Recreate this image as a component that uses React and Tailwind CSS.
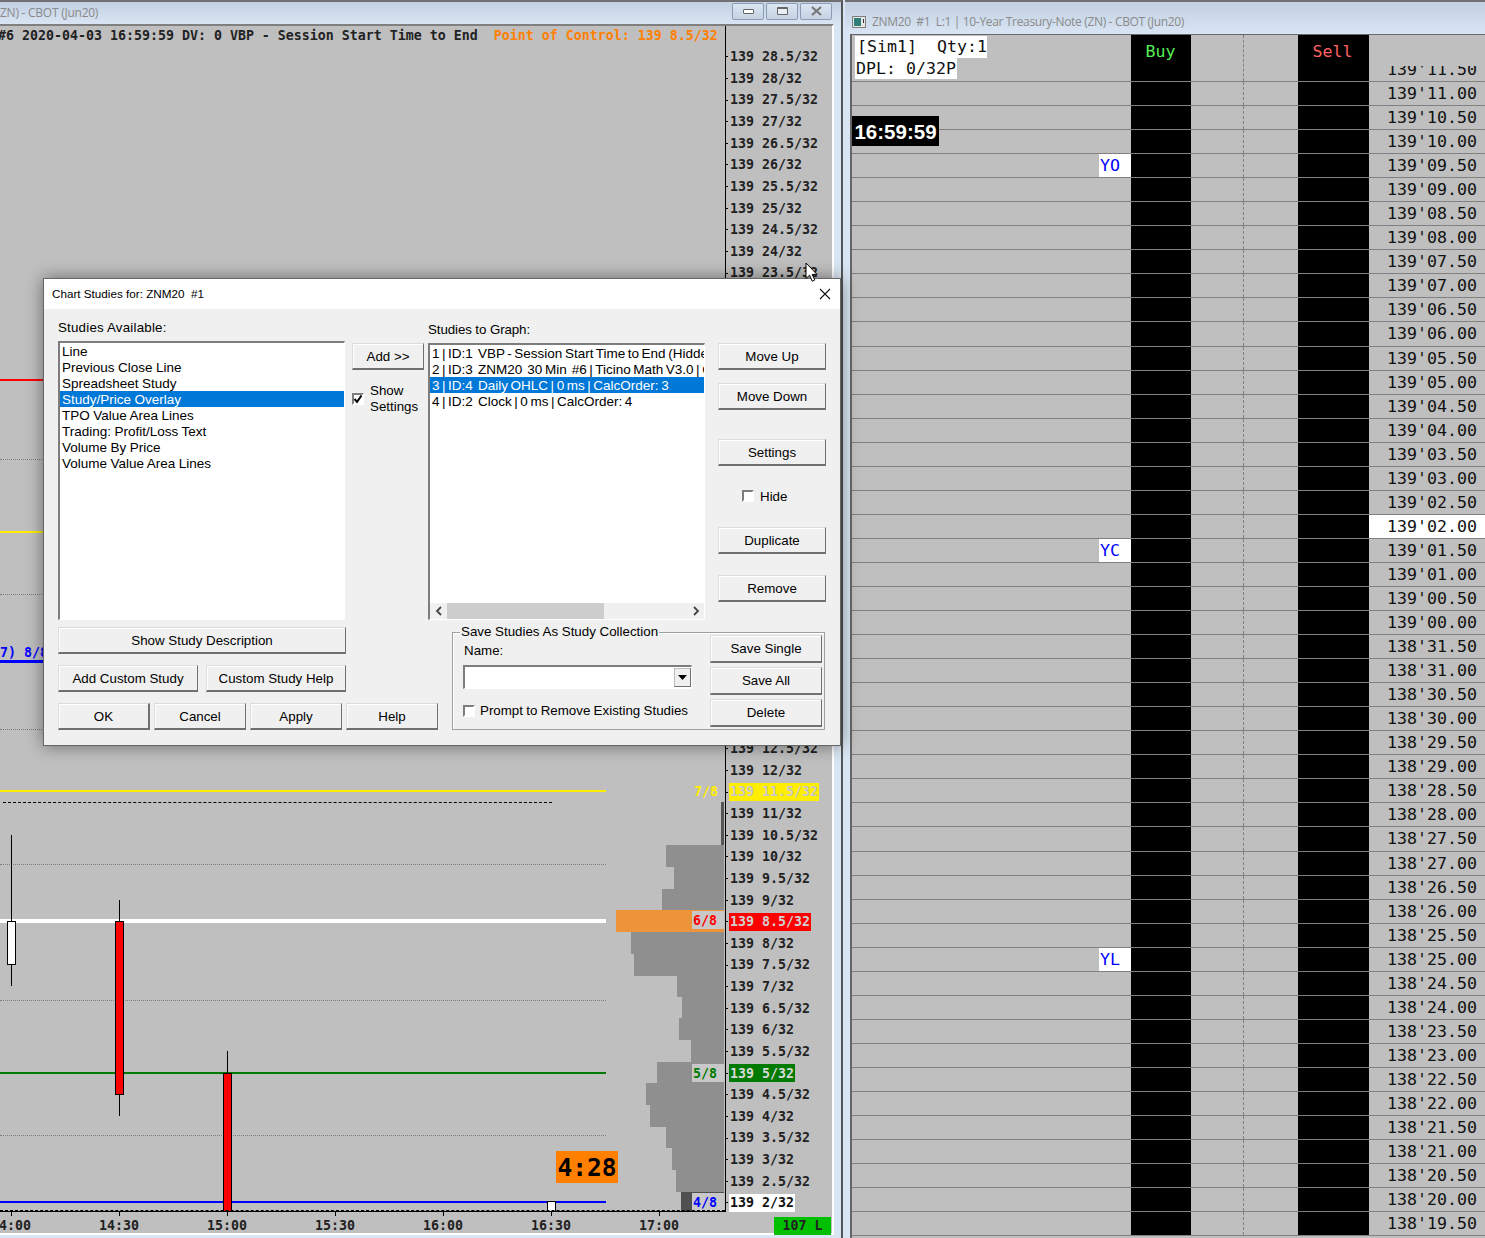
import React from 'react';

const MONO = "font-['DejaVu_Sans_Mono',monospace]";

// price axis of the chart, from 28.5/32 down to 2/32
const axisLabels = [];
for (let v = 28.5; v >= 2; v -= 0.5) axisLabels.push(v);

const axisMarks = {
  11.5: 'bg-[#ffee00] text-[#c8c8c8]',
  8.5: 'bg-[#ff0000] text-[#d0d0d0]',
  5: 'bg-[#007a00] text-[#d8d8d8]',
  2: 'bg-white text-[#111]',
};

// volume profile, [x, top, bottom]
const profile = [
  [721, 802, 845, '#555555'],
  [666, 845, 867],
  [674, 867, 889],
  [662, 889, 910],
  [616, 910, 932, '#ed943b'],
  [631, 932, 954],
  [634, 954, 976],
  [677, 976, 997],
  [682, 997, 1018],
  [679, 1018, 1040],
  [691, 1040, 1062],
  [657, 1062, 1083],
  [646, 1083, 1105],
  [650, 1105, 1127],
  [666, 1127, 1148],
  [672, 1148, 1170],
  [676, 1170, 1192],
  [681, 1192, 1212, '#505050'],
];

const dottedRows = [459, 594, 729, 864, 1000, 1135];
const timeLabels = [['14:00', 11], ['14:30', 119], ['15:00', 227], ['15:30', 335], ['16:00', 443], ['16:30', 551], ['17:00', 659]];

// ladder prices, half ticks from 139'11.00
const ladderPrices = [];
for (let i = 0; i < 48; i++) {
  const total = 139 * 32 + 11 - i * 0.5;
  const whole = Math.floor(total / 32);
  const rest = total - whole * 32;
  ladderPrices.push(`${whole}'${rest.toFixed(2).padStart(5, '0')}`);
}
const ladderTags = { "139'09.50": 'YO', "139'01.50": 'YC', "138'25.00": 'YL' };

const BTN = 'flex items-center justify-center border border-t-[#dcdcdc] border-l-[#dcdcdc] border-r-[#707070] border-b-2 border-b-[#707070] bg-[#f0f0f0] pt-[2px] shadow-[inset_1px_1px_0_#fff] text-[13.33px] leading-none text-black';
const SUNKEN = 'border-t-2 border-l-2 border-r border-b border-t-[#7d7d7d] border-l-[#7d7d7d] border-r-white border-b-white bg-white';

function Btn({ className, children }) {
  return <div className={`${BTN} ${className}`}>{children}</div>;
}

function Check({ checked }) {
  return (
    <div className="flex h-[12px] w-[12px] shrink-0 items-center justify-center border-2 border-t-[#7d7d7d] border-l-[#7d7d7d] border-r-white border-b-white bg-white">
      {checked && (
        <svg width="10" height="10" viewBox="0 0 10 10" className="shrink-0">
          <path d="M1.5 5 L4 7.8 L8.5 1.5" fill="none" stroke="#000" strokeWidth="2" />
        </svg>
      )}
    </div>
  );
}

function ListRow({ selected, spacing, children }) {
  return (
    <div className={`h-[16px] overflow-hidden whitespace-pre px-[2px] text-[13.5px] leading-[18px] ${spacing} ${selected ? 'bg-[#0078d7] text-white' : 'text-black'}`}>
      {children}
    </div>
  );
}

function ChartStudiesDialog() {
  const tight = '[word-spacing:-1.2px]';
  return (
    <div className="absolute left-[43px] top-[278px] z-10 h-[468px] w-[798px] border border-[#666] bg-[#f0f0f0] font-['Liberation_Sans',sans-serif] text-black shadow-[0_0_16px_rgba(0,0,0,0.45)]">
      <div className="flex h-[30px] items-center justify-between bg-white pl-[8px] pr-[9px] text-[11.7px]">
        <span className="whitespace-pre">Chart Studies for: ZNM20  #1</span>
        <svg width="12" height="12" viewBox="0 0 12 12">
          <path d="M1 1 L11 11 M11 1 L1 11" stroke="#111" strokeWidth="1.1" />
        </svg>
      </div>

      <div className="pl-[14px] pt-[10px] text-[13.33px]">
        <div className="flex h-[301px]">
          <div className="w-[287px]">
            <div className="h-[22px] leading-[18px] tracking-[0.2px]">Studies Available:</div>
            <div className={`h-[279px] ${SUNKEN}`}>
              {['Line', 'Previous Close Line', 'Spreadsheet Study', 'Study/Price Overlay', 'TPO Value Area Lines', 'Trading: Profit/Loss Text', 'Volume By Price', 'Volume Value Area Lines'].map((s, i) => (
                <ListRow key={s} selected={i === 3} spacing="[word-spacing:-0.3px]">{s}</ListRow>
              ))}
            </div>
          </div>

          <div className="ml-[7px] w-[72px] pt-[24px]">
            <Btn className="h-[27px] w-[72px]">Add &gt;&gt;</Btn>
            <div className="mt-[13px] flex items-center gap-[6px]">
              <Check checked />
              <div className="leading-[16px]">Show<br />Settings</div>
            </div>
          </div>

          <div className="ml-[4px] w-[277px] pt-[2px]">
            <div className="h-[22px] leading-[18px] tracking-[-0.1px]">Studies to Graph:</div>
            <div className={`flex h-[277px] flex-col ${SUNKEN}`}>
              <div className="flex-1">
                <ListRow spacing={tight}>1 | ID:1  VBP - Session Start Time to End (Hidden) | 0 ms</ListRow>
                <ListRow spacing={tight}>2 | ID:3  ZNM20  30 Min  #6 | Ticino Math V3.0 | CalcOrder: 2</ListRow>
                <ListRow selected spacing={tight}>3 | ID:4  Daily OHLC | 0 ms | CalcOrder: 3</ListRow>
                <ListRow spacing={tight}>4 | ID:2  Clock | 0 ms | CalcOrder: 4</ListRow>
              </div>
              <div className="flex h-[16px] items-center bg-[#f0f0f0]">
                <div className="flex w-[17px] justify-center">
                  <svg width="8" height="10" viewBox="0 0 8 10"><path d="M6 1 L2 5 L6 9" fill="none" stroke="#444" strokeWidth="1.8" /></svg>
                </div>
                <div className="h-full w-[157px] bg-[#cdcdcd]" />
                <div className="flex flex-1 justify-end pr-[4px]">
                  <svg width="8" height="10" viewBox="0 0 8 10"><path d="M2 1 L6 5 L2 9" fill="none" stroke="#444" strokeWidth="1.8" /></svg>
                </div>
              </div>
            </div>
          </div>

          <div className="ml-[13px] flex w-[108px] flex-col pt-[24px]">
            <Btn className="h-[27px]">Move Up</Btn>
            <Btn className="mt-[13px] h-[27px]">Move Down</Btn>
            <Btn className="mt-[29px] h-[27px]">Settings</Btn>
            <div className="mt-[24px] flex h-[12px] items-center gap-[6px] pl-[24px]">
              <Check />
              <span className="pt-px">Hide</span>
            </div>
            <Btn className="mt-[25px] h-[27px]">Duplicate</Btn>
            <Btn className="mt-[21px] h-[27px]">Remove</Btn>
          </div>
        </div>

        <div className="flex">
          <div className="w-[380px] pt-[7px]">
            <Btn className="h-[27px] w-[288px]">Show Study Description</Btn>
            <div className="mt-[11px] flex gap-[8px]">
              <Btn className="h-[27px] w-[140px]">Add Custom Study</Btn>
              <Btn className="h-[27px] w-[140px]">Custom Study Help</Btn>
            </div>
            <div className="mt-[11px] flex gap-[4px]">
              <Btn className="h-[27px] w-[92px] border-[#666] border-r-2 border-r-[#666] border-b-[#666]">OK</Btn>
              <Btn className="h-[27px] w-[92px]">Cancel</Btn>
              <Btn className="h-[27px] w-[92px]">Apply</Btn>
              <Btn className="h-[27px] w-[92px]">Help</Btn>
            </div>
          </div>

          <div className="relative ml-[14px] mt-[12px] flex h-[98px] w-[373px] border border-[#a0a0a0] shadow-[inset_1px_1px_0_#fff]">
            <span className="absolute left-[7px] top-[-9px] bg-[#f0f0f0] px-[1px] leading-[15px]">Save Studies As Study Collection</span>
            <div className="w-[257px] pl-[10px] pt-[10px]">
              <div className="pl-[1px] leading-[16px]">Name:</div>
              <div className={`mt-[6px] flex h-[24px] w-[229px] items-center justify-end ${SUNKEN}`}>
                <div className="flex h-[19px] w-[17px] items-center justify-center border border-[#bbb] border-r-[#707070] border-b-[#707070] bg-[#f0f0f0]">
                  <svg width="9" height="5" viewBox="0 0 9 5"><path d="M0 0 H9 L4.5 5 Z" fill="#000" /></svg>
                </div>
              </div>
              <div className="mt-[12px] flex items-center gap-[5px]">
                <Check />
                <span className="whitespace-pre [word-spacing:-0.4px]">Prompt to Remove Existing Studies</span>
              </div>
            </div>
            <div className="flex w-[112px] flex-col gap-[4px] pt-[2px]">
              <Btn className="h-[28px] pb-[2px]">Save Single</Btn>
              <Btn className="h-[28px] pb-[2px]">Save All</Btn>
              <Btn className="h-[28px] pb-[2px]">Delete</Btn>
            </div>
          </div>
        </div>
      </div>
    </div>
  );
}

function WinButton({ children }) {
  return (
    <div className="flex h-[17px] w-[32px] items-center justify-center rounded-[2px] border border-[#8b9db4] bg-linear-to-b from-[#dce6f2] to-[#c4d2e3]">
      {children}
    </div>
  );
}

function LeftWindow() {
  return (
    <div className="flex h-full w-[843px] shrink-0 flex-col border-r-2 border-r-[#555] border-t-2 border-t-[#707070] bg-[#d9e5f3]">
      <div className="flex h-[22px] shrink-0 items-center justify-between bg-linear-to-b from-[#c2d0e2] to-[#d9e5f3] pr-[9px] font-['Open_Sans',sans-serif] text-[12px] text-[#8a8a8a]">
        <span className="-mt-[1px] whitespace-pre tracking-[-0.25px]">ZN) - CBOT (Jun20)</span>
        <div className="-mt-[4px] flex gap-[2px]">
          <WinButton><div className="h-[5px] w-[11px] rounded-[1px] border border-[#666] bg-white" /></WinButton>
          <WinButton><div className="h-[8px] w-[11px] rounded-[1px] border border-t-2 border-[#666] bg-[#e8eef6]" /></WinButton>
          <WinButton>
            <svg width="13" height="10" viewBox="0 0 13 10"><path d="M2 1 L11 9 M11 1 L2 9" stroke="#777" strokeWidth="2.2" /></svg>
          </WinButton>
        </div>
      </div>

      <div className={`flex h-[1211px] w-[834px] shrink-0 border-t-2 border-t-[#808080] border-r-2 border-r-white border-b-2 border-b-white bg-[#bfbfbf] ${MONO} text-[13.29px] font-bold`}>
        <ChartPlot />
        <PriceAxis />
      </div>
    </div>
  );
}

function ChartPlot() {
  return (
    <div className="relative h-full w-[726px] shrink-0 overflow-hidden">
      <div className="-ml-[2px] mt-[1px] h-[17px] whitespace-pre leading-[17px] text-[#222]">
        #6 2020-04-03 16:59:59 DV: 0 VBP - Session Start Time to End  <span className="text-[#ff8000]">Point of Control: 139 8.5/32</span>
      </div>

      {dottedRows.map((y) => (
        <div key={y} className="absolute left-0 w-[606px] border-t border-dotted border-[#7c7c7c]" style={{ top: y - 26 }} />
      ))}

      <div className="absolute left-0 top-[353px] h-[2px] w-[606px] bg-[#ff0000]" />
      <div className="absolute left-0 top-[505px] h-[2px] w-[606px] bg-[#ffee00]" />
      <div className="absolute left-0 top-[617px] text-[#0000ff]">7) 8/8</div>
      <div className="absolute left-0 top-[634px] h-[3px] w-[606px] bg-[#0000ff]" />
      <div className="absolute left-0 top-[764px] h-[2px] w-[606px] bg-[#ffee00]" />
      <div className="absolute left-[3px] top-[776px] w-[549px] border-t border-dashed border-black" />
      <div className="absolute left-0 top-[893px] h-[4px] w-[606px] bg-white" />
      <div className="absolute left-0 top-[1046px] h-[2px] w-[606px] bg-[#007a00]" />
      <div className="absolute left-0 top-[1175px] h-[2px] w-[606px] bg-[#0000ff]" />

      {/* candles */}
      <div className="absolute left-[11px] top-[809px] h-[151px] w-px bg-black" />
      <div className="absolute left-[7px] top-[895px] h-[44px] w-[9px] border border-black bg-white" />
      <div className="absolute left-[119px] top-[874px] h-[216px] w-px bg-black" />
      <div className="absolute left-[115px] top-[895px] h-[174px] w-[9px] border border-black bg-[#ff0000]" />
      <div className="absolute left-[227px] top-[1025px] h-[30px] w-px bg-black" />
      <div className="absolute left-[223px] top-[1047px] h-[139px] w-[9px] border border-black bg-[#ff0000]" />
      <div className="absolute left-[547px] top-[1175px] h-[11px] w-[9px] border border-black bg-white" />

      {/* volume profile */}
      {profile.map(([x, top, bottom, color]) => (
        <div
          key={top}
          className="absolute bg-[#8f8f8f]"
          style={{ left: x, width: 724 - x, top: top - 26, height: bottom - top, backgroundColor: color }}
        />
      ))}

      <div className="absolute left-[694px] top-[756px] text-[#ffee00]">7/8</div>
      <div className="absolute left-[692px] top-[885px] h-[18px] w-[32px] bg-[#c8c8c8] pl-[1px] leading-[20px] text-[#ff0000]">6/8</div>
      <div className="absolute left-[692px] top-[1038px] h-[18px] w-[32px] bg-[#c8c8c8] pl-[1px] leading-[20px] text-[#007a00]">5/8</div>
      <div className="absolute left-[692px] top-[1167px] h-[18px] w-[32px] bg-[#c8c8c8] pl-[1px] leading-[20px] text-[#0000ff]">4/8</div>

      <div className="absolute left-[556px] top-[1125px] flex h-[32px] w-[62px] items-center justify-center bg-[#ff8000] pt-[2px] text-[24.6px] leading-none text-black">4:28</div>

      {/* axes */}
      <div className="absolute left-[725px] top-0 h-[1186px] w-px bg-black" />
      <div className="absolute left-0 top-[1185px] h-px w-[726px] bg-black" />
      <div className="absolute left-0 top-[1184px] w-[725px] border-t border-dashed border-black" />

      {timeLabels.map(([t, x]) => (
        <React.Fragment key={t}>
          <div className="absolute top-[1186px] h-[4px] w-px bg-black" style={{ left: x }} />
          <div className="absolute top-[1192px] w-[60px] text-center leading-[16px] text-[#222]" style={{ left: x - 30 }}>{t}</div>
        </React.Fragment>
      ))}
    </div>
  );
}

function PriceAxis() {
  return (
    <div className="flex-1 pt-[20px] leading-none text-[#222]">
      {axisLabels.map((v) => (
        <div key={v} className="flex h-[21.64px] items-center">
          <span className="mr-[1px] h-px w-[2px] bg-black" />
          <span className={`flex h-[18px] items-center whitespace-pre pl-[1px] pr-[1px] ${axisMarks[v] || ''}`}>{`139 ${v}/32`}</span>
        </div>
      ))}
      <div className="ml-[48px] mt-[3px] flex h-[18px] w-[57px] items-center justify-center whitespace-pre bg-[#00c000] text-[#222]">107 L</div>
    </div>
  );
}

function LadderRow({ price, tag, current }) {
  return (
    <div className="flex h-[24.06px] border-b border-[#808080]">
      <div className="flex w-[279px] justify-end">
        {tag && <div className="w-[32px] bg-white pl-[1px] leading-[23px] text-[#0000ff]">{tag}</div>}
      </div>
      <div className="w-[60px] bg-black" />
      <div className="w-[107px]"><div className="h-full w-[53px] border-r border-dashed border-[#808080]" /></div>
      <div className="w-[71px] bg-black" />
      <div className={`flex-1 pl-[18px] leading-[23px] text-[#111] ${current ? 'bg-white' : ''}`}>{price}</div>
    </div>
  );
}

function RightWindow() {
  return (
    <div className="relative flex h-full flex-1 flex-col border-t-2 border-t-[#707070] bg-[#d9e5f3]">
      <div className="flex h-[32px] shrink-0 items-center gap-[6px] bg-linear-to-b from-[#c2d0e2] to-[#d9e5f3] pl-[7px] pt-[7px] font-['Open_Sans',sans-serif] text-[12px] text-[#8a8a8a]">
        <svg width="14" height="12" viewBox="0 0 14 12" className="shrink-0">
          <rect x="0.5" y="0.5" width="13" height="11" fill="#e6e6e6" stroke="#7f7f7f" />
          <rect x="2" y="2" width="7" height="8" fill="#2f7f78" />
          <rect x="11" y="3" width="1" height="4" fill="#333" />
        </svg>
        <span className="whitespace-pre tracking-[-0.34px]">ZNM20  #1  L:1 | 10-Year Treasury-Note (ZN) - CBOT (Jun20)</span>
      </div>

      <div className="ml-[5px] flex-1 overflow-hidden border-t border-l-2 border-[#666] bg-[#bfbfbf] font-['DejaVu_Sans_Mono',monospace] text-[16.6px]">
        <div className="flex h-[47px] border-b border-[#808080]">
          <div className="w-[279px] pl-[3px] pt-[1px] text-[#111]">
            <div className="w-[132px] whitespace-pre bg-white pl-[2px] leading-[22px]">[Sim1]  Qty:1</div>
            <div className="w-[102px] whitespace-pre bg-white pl-[1px] leading-[21px]">DPL: 0/32P</div>
          </div>
          <div className="flex w-[60px] justify-center bg-black pr-[1px] pt-[6px] leading-[22px] text-[#55ee55]">Buy</div>
          <div className="w-[107px]"><div className="h-full w-[53px] border-r border-dashed border-[#808080]" /></div>
          <div className="flex w-[71px] justify-center bg-black pr-[2px] pt-[6px] leading-[22px] text-[#ff6060]">Sell</div>
          <div className="flex-1 self-end overflow-hidden"><div className="h-[15px] overflow-hidden"><div className="-mt-[8px] pl-[18px] leading-[23px] text-[#111]">139'11.50</div></div></div>
        </div>
        {ladderPrices.map((p) => (
          <LadderRow key={p} price={p} tag={ladderTags[p]} current={p === "139'02.00"} />
        ))}
      </div>

      <div className="absolute left-[7px] top-[114px] flex h-[30px] w-[87px] items-center justify-center bg-black pt-[3px] font-['Liberation_Sans',sans-serif] text-[20.5px] font-bold text-white">16:59:59</div>
    </div>
  );
}

export default function App() {
  return (
    <div className="relative flex h-[1238px] w-[1485px] overflow-hidden bg-[#d9e5f3]">
      <LeftWindow />
      <div className="w-[2px] shrink-0 bg-[#d9e5f3]" />
      <RightWindow />
      <ChartStudiesDialog />
      <svg width="14" height="21" viewBox="0 0 14 21" className="absolute left-[805px] top-[262px] z-20">
        <path d="M1 1 L1 16.5 L4.6 13.2 L7.2 19.2 L9.8 18 L7.2 12.4 L12 12.4 Z" fill="#fff" stroke="#000" strokeWidth="1" />
      </svg>
    </div>
  );
}
